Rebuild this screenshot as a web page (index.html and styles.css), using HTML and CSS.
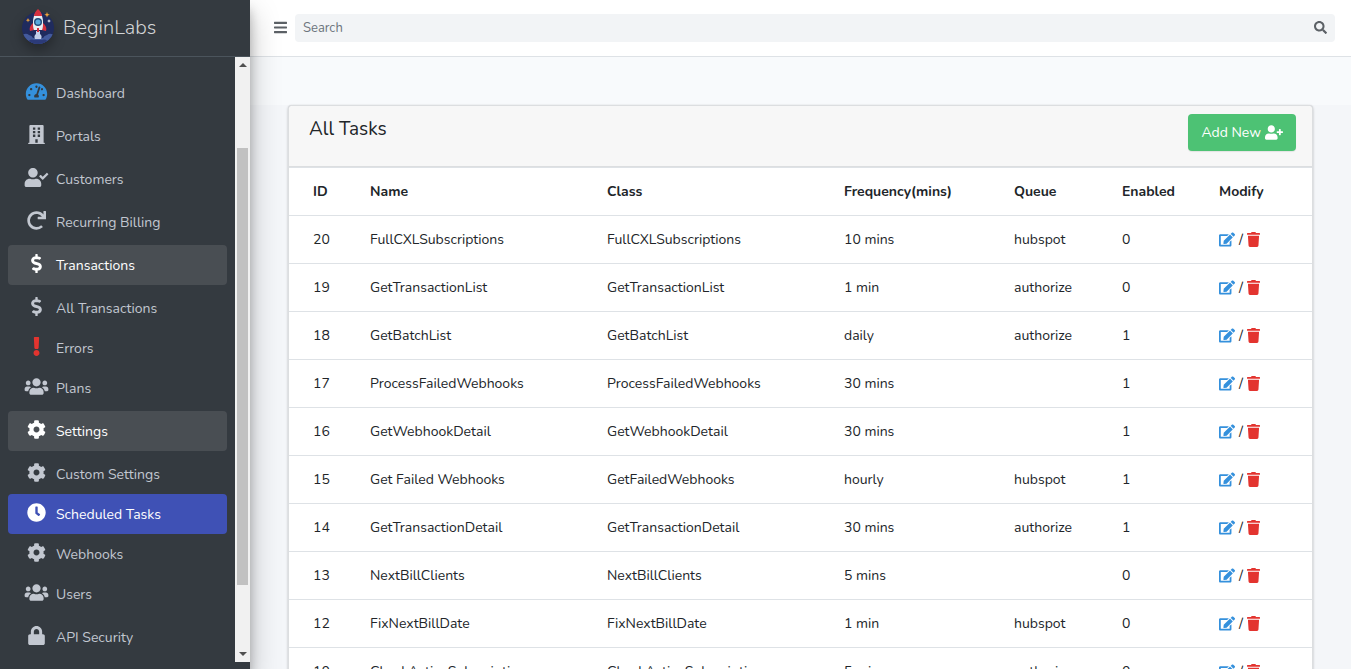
FILE: index.html
```html
<!DOCTYPE html>
<html lang="en">
<head>
  <meta charset="UTF-8">
  <meta name="viewport" content="width=device-width, initial-scale=1.0">
  <title>BeginLabs - Scheduled Tasks</title>
  <link rel="stylesheet" href="styles.css">
</head>
<body>

  <!-- icons -->
  <svg class="sprite" aria-hidden="true">
    <symbol id="bars" viewBox="0 0 448 512"><path d="M16 132h416c8.837 0 16-7.163 16-16V76c0-8.837-7.163-16-16-16H16C7.163 60 0 67.163 0 76v40c0 8.837 7.163 16 16 16zm0 160h416c8.837 0 16-7.163 16-16v-40c0-8.837-7.163-16-16-16H16c-8.837 0-16 7.163-16 16v40c0 8.837 7.163 16 16 16zm0 160h416c8.837 0 16-7.163 16-16v-40c0-8.837-7.163-16-16-16H16c-8.837 0-16 7.163-16 16v40c0 8.837 7.163 16 16 16z"/></symbol>
    <symbol id="search" viewBox="0 0 512 512"><path d="M505 442.7L405.3 343c-4.5-4.5-10.6-7-17-7H372c27.6-35.3 44-79.7 44-128C416 93.1 322.9 0 208 0S0 93.1 0 208s93.1 208 208 208c48.3 0 92.7-16.4 128-44v16.3c0 6.4 2.5 12.5 7 17l99.7 99.7c9.4 9.4 24.6 9.4 33.9 0l28.3-28.3c9.4-9.4 9.4-24.6.1-34zM208 336c-70.7 0-128-57.2-128-128 0-70.7 57.2-128 128-128 70.7 0 128 57.2 128 128 0 70.7-57.2 128-128 128z"/></symbol>
    <symbol id="tachometer" viewBox="0 0 576 512"><path d="M288 32C128.94 32 0 160.94 0 320c0 52.8 14.25 102.26 39.06 144.8 5.61 9.62 16.3 15.2 27.44 15.2h443c11.14 0 21.83-5.58 27.44-15.2C561.75 422.26 576 372.8 576 320c0-159.06-128.94-288-288-288zm0 64c14.71 0 26.58 10.13 30.32 23.65-1.11 2.26-2.64 4.23-3.45 6.67l-9.22 27.67c-5.13 3.49-10.97 6.01-17.64 6.01-17.67 0-32-14.33-32-32S270.33 96 288 96zM96 384c-17.67 0-32-14.33-32-32s14.33-32 32-32 32 14.33 32 32-14.33 32-32 32zm48-160c-17.67 0-32-14.33-32-32s14.33-32 32-32 32 14.33 32 32-14.33 32-32 32zm246.77-72.41l-61.33 184C343.13 347.33 352 364.54 352 384c0 11.72-3.38 22.55-8.88 32H232.88c-5.5-9.45-8.88-20.28-8.88-32 0-33.94 26.5-61.43 59.9-63.59l61.34-184.01c4.17-12.56 17.73-19.45 30.36-15.17 12.57 4.19 19.35 17.79 15.17 30.36zm14.66 57.2l15.52-46.55c3.47-1.29 7.13-2.23 11.05-2.23 17.67 0 32 14.33 32 32s-14.33 32-32 32c-11.38-.01-20.89-6.28-26.57-15.22zM480 384c-17.67 0-32-14.33-32-32s14.33-32 32-32 32 14.33 32 32-14.33 32-32 32z"/></symbol>
    <symbol id="building" viewBox="0 0 448 512"><path fill-rule="evenodd" d="M436 480h-20V24c0-13.255-10.745-24-24-24H56C42.745 0 32 10.745 32 24v456H12c-6.627 0-12 5.373-12 12v20h448v-20c0-6.627-5.373-12-12-12zM128 64h64v64h-64zM256 64h64v64h-64zM128 160h64v64h-64zM256 160h64v64h-64zM128 256h64v64h-64zM256 256h64v64h-64zM192 384h64v96h-64z"/></symbol>
    <symbol id="user-check" viewBox="0 0 640 512"><path d="M224 256c70.7 0 128-57.3 128-128S294.7 0 224 0 96 57.3 96 128s57.3 128 128 128zm89.6 32h-16.7c-22.2 10.2-46.9 16-72.9 16s-50.6-5.8-72.9-16h-16.7C60.2 288 0 348.2 0 422.4V464c0 26.5 21.5 48 48 48h352c26.5 0 48-21.5 48-48v-41.6c0-74.2-60.2-134.4-134.4-134.4zm323-128.4l-27.8-28.1c-4.6-4.7-12.1-4.7-16.8-.1l-104.8 104-45.5-45.8c-4.6-4.7-12.1-4.7-16.8-.1l-28.1 27.9c-4.7 4.6-4.7 12.1-.1 16.8l81.7 82.3c4.6 4.7 12.1 4.7 16.8.1l141.3-140.2c4.6-4.7 4.7-12.2.1-16.8z"/></symbol>
    <symbol id="user-plus" viewBox="0 0 640 512"><path d="M624 208h-64v-64c0-8.8-7.2-16-16-16h-32c-8.8 0-16 7.2-16 16v64h-64c-8.8 0-16 7.2-16 16v32c0 8.8 7.2 16 16 16h64v64c0 8.8 7.2 16 16 16h32c8.8 0 16-7.2 16-16v-64h64c8.8 0 16-7.2 16-16v-32c0-8.8-7.2-16-16-16zM224 256c70.7 0 128-57.3 128-128S294.7 0 224 0 96 57.3 96 128s57.3 128 128 128zm89.6 32h-16.7c-22.2 10.2-46.9 16-72.9 16s-50.6-5.8-72.9-16h-16.7C60.2 288 0 348.2 0 422.4V464c0 26.5 21.5 48 48 48h352c26.5 0 48-21.5 48-48v-41.6c0-74.2-60.2-134.4-134.4-134.4z"/></symbol>
    <symbol id="redo" viewBox="0 0 512 512"><path d="M500.33 0h-47.41a12 12 0 0 0-12 12.57l4 82.76A247.42 247.42 0 0 0 256 8C119.34 8 7.9 119.53 8 256.19 8.1 393.07 119.1 504 256 504a247.1 247.1 0 0 0 166.18-63.91 12 12 0 0 0 .48-17.43l-34-34a12 12 0 0 0-16.38-.55A176 176 0 1 1 402.1 157.8l-101.53-4.87a12 12 0 0 0-12.57 12v47.41a12 12 0 0 0 12 12h200.33a12 12 0 0 0 12-12V12a12 12 0 0 0-12-12z"/></symbol>
    <symbol id="dollar" viewBox="0 0 288 512"><path d="M209.2 233.4l-108-31.6C88.7 198.2 80 186.5 80 173.5c0-16.3 13.2-29.5 29.5-29.5h66.3c12.2 0 24.2 3.7 34.2 10.5 6.1 4.1 14.3 3.1 19.5-2l34.8-34c7.1-6.9 6.1-18.4-1.8-24.5C238 74.8 207.4 64.1 176 64V16c0-8.8-7.2-16-16-16h-32c-8.8 0-16 7.2-16 16v48h-2.5C45.8 64-5.4 118.7.5 183.6c4.2 46.1 39.4 83.6 83.8 96.6l102.5 30c12.5 3.7 21.2 15.3 21.2 28.3 0 16.3-13.2 29.5-29.5 29.5h-66.3C100 368 88 364.3 78 357.5c-6.1-4.1-14.3-3.1-19.5 2l-34.8 34c-7.1 6.9-6.1 18.4 1.8 24.5 24.5 19.2 55.1 29.9 86.5 30v48c0 8.8 7.2 16 16 16h32c8.8 0 16-7.2 16-16v-48.2c46.6-.9 90.3-28.6 105.7-72.7 21.5-61.6-14.6-124.8-72.5-141.7z"/></symbol>
    <symbol id="exclamation" viewBox="0 0 192 512"><path d="M176 432c0 44.112-35.888 80-80 80s-80-35.888-80-80 35.888-80 80-80 80 35.888 80 80zM25.26 25.199l13.6 272C39.499 309.972 50.041 320 62.83 320h66.34c12.789 0 23.331-10.028 23.97-22.801l13.6-272C167.425 11.49 156.496 0 142.77 0H49.23C35.504 0 24.575 11.49 25.26 25.199z"/></symbol>
    <symbol id="users" viewBox="0 0 640 512"><path d="M96 224c35.3 0 64-28.7 64-64s-28.7-64-64-64-64 28.7-64 64 28.7 64 64 64zm448 0c35.3 0 64-28.7 64-64s-28.7-64-64-64-64 28.7-64 64 28.7 64 64 64zm32 32h-64c-17.6 0-33.5 7.1-45.1 18.6 40.3 22.1 68.9 62 75.1 109.4h66c17.7 0 32-14.3 32-32v-32c0-35.3-28.7-64-64-64zm-256 0c61.9 0 112-50.1 112-112S381.9 32 320 32 208 82.1 208 144s50.1 112 112 112zm76.8 32h-8.3c-20.8 10-43.9 16-68.5 16s-47.6-6-68.5-16h-8.3C179.6 288 128 339.6 128 403.2V432c0 26.5 21.5 48 48 48h288c26.5 0 48-21.5 48-48v-28.8c0-63.6-51.6-115.2-115.2-115.2zm-223.7-13.4C161.5 263.1 145.6 256 128 256H64c-35.3 0-64 28.7-64 64v32c0 17.7 14.3 32 32 32h65.9c6.3-47.4 34.9-87.3 75.2-109.4z"/></symbol>
    <symbol id="cog" viewBox="0 0 512 512"><path d="M487.4 315.7l-42.6-24.6c4.3-23.2 4.3-47 0-70.2l42.6-24.6c4.9-2.8 7.1-8.6 5.5-14-11.1-35.6-30-67.8-54.7-94.6-3.8-4.1-10-5.1-14.8-2.3L380.8 110c-17.9-15.4-38.5-27.3-60.8-35.1V25.8c0-5.6-3.9-10.5-9.4-11.7-36.7-8.2-74.3-7.8-109.2 0-5.5 1.2-9.4 6.1-9.4 11.7V75c-22.2 7.9-42.8 19.8-60.8 35.1L88.7 85.5c-4.9-2.8-11-1.9-14.8 2.3-24.7 26.7-43.6 58.9-54.7 94.6-1.7 5.4.6 11.2 5.5 14L67.3 221c-4.3 23.2-4.3 47 0 70.2l-42.6 24.6c-4.9 2.8-7.1 8.6-5.5 14 11.1 35.6 30 67.8 54.7 94.6 3.8 4.1 10 5.1 14.8 2.3l42.6-24.6c17.9 15.4 38.5 27.3 60.8 35.1v49.2c0 5.6 3.9 10.5 9.4 11.7 36.7 8.2 74.3 7.8 109.2 0 5.5-1.2 9.4-6.1 9.4-11.7v-49.2c22.2-7.9 42.8-19.8 60.8-35.1l42.6 24.6c4.9 2.8 11 1.9 14.8-2.3 24.7-26.7 43.6-58.9 54.7-94.6 1.5-5.5-.7-11.3-5.6-14.1zM256 336c-44.1 0-80-35.9-80-80s35.9-80 80-80 80 35.9 80 80-35.9 80-80 80z"/></symbol>
    <symbol id="clock" viewBox="0 0 512 512"><path d="M256 8C119 8 8 119 8 256s111 248 248 248 248-111 248-248S393 8 256 8zm92.49 313l-20 25a16 16 0 0 1-22.49 2.5l-67-49.72a40 40 0 0 1-15-31.23V112a16 16 0 0 1 16-16h32a16 16 0 0 1 16 16v144l58 42.5a16 16 0 0 1 2.49 22.5z"/></symbol>
    <symbol id="lock" viewBox="0 0 448 512"><path d="M400 224h-24v-72C376 68.2 307.8 0 224 0S72 68.2 72 152v72H48c-26.5 0-48 21.5-48 48v192c0 26.5 21.5 48 48 48h352c26.5 0 48-21.5 48-48V272c0-26.5-21.5-48-48-48zm-104 0H152v-72c0-39.7 32.3-72 72-72s72 32.3 72 72v72z"/></symbol>
    <symbol id="edit" viewBox="0 0 576 512"><path d="M402.6 83.2l90.2 90.2c3.8 3.8 3.8 10 0 13.8L274.4 405.6l-92.8 10.3c-12.4 1.4-22.9-9.1-21.5-21.5l10.3-92.8L388.8 83.2c3.8-3.8 10-3.8 13.8 0zm162-22.9l-48.8-48.8c-15.2-15.2-39.9-15.2-55.2 0l-35.4 35.4c-3.8 3.8-3.8 10 0 13.8l90.2 90.2c3.8 3.8 10 3.8 13.8 0l35.4-35.4c15.2-15.3 15.2-40 0-55.2zM384 346.2V448H64V128h229.8c3.2 0 6.2-1.3 8.5-3.5l40-40c7.6-7.6 2.2-20.5-8.5-20.5H48C21.5 64 0 85.5 0 112v352c0 26.5 21.5 48 48 48h352c26.5 0 48-21.5 48-48V306.2c0-10.7-12.9-16-20.5-8.5l-40 40c-2.2 2.3-3.5 5.3-3.5 8.5z"/></symbol>
    <symbol id="trash" viewBox="0 0 448 512"><path d="M432 32H312l-9.4-18.7A24 24 0 0 0 281.1 0H166.8a23.72 23.72 0 0 0-21.4 13.3L136 32H16A16 16 0 0 0 0 48v32a16 16 0 0 0 16 16h416a16 16 0 0 0 16-16V48a16 16 0 0 0-16-16zM53.2 467a48 48 0 0 0 47.9 45h245.8a48 48 0 0 0 47.9-45L416 128H32z"/></symbol>
  </svg>

  <div class="wrapper">

    <!-- sidebar -->
    <aside class="sidebar">
      <a href="#" class="brand">
        <svg class="brand-logo" viewBox="0 0 34 36" aria-hidden="true">
          <defs><clipPath id="disc"><circle cx="17" cy="19" r="16"/></clipPath></defs>
          <circle cx="17" cy="19" r="16" fill="#1f2b5e"/>
          <g clip-path="url(#disc)">
            <path d="M0 28a5 5 0 0 1 8-2 5 5 0 0 1 4 3h10a5 5 0 0 1 4-3 5 5 0 0 1 8 2v9H0z" fill="#435a9c"/>
            <path d="M7 34a4 4 0 0 1 6-3h8a4 4 0 0 1 6 3v4H7z" fill="#2b3a78"/>
          </g>
          <path d="M15 22h4v3a4 4 0 0 1 1 5h-6a4 4 0 0 1 1-5z" fill="#c3cfe8"/>
          <path d="M12 14c-3 3-4 5-3 8l4-1zM22 14c3 3 4 5 3 8l-4-1z" fill="#d5303e"/>
          <path d="M17 1c-4 4-5 8-5 12 0 4 0 6 1 8h8c1-2 1-4 1-8 0-4-1-8-5-12z" fill="#e9edf3"/>
          <path d="M17 0c-2 2-4 4-4 7h8c0-3-2-5-4-7z" fill="#d5303e"/>
          <circle cx="17" cy="13" r="4" fill="#1f4a78"/>
          <circle cx="17" cy="13" r="2.600" fill="#58a9de"/>
          <path d="M16 19h2v4h-2z" fill="#d5303e"/>
          <path d="M26 3l.7 2 2 .7-2 .7-.7 2-.7-2-2-.7 2-.7zM7 9l.6 1.600 1.600.6-1.600.6L7 13.400l-.6-1.600-1.600-.6 1.600-.6z" fill="#f2a63a"/>
          <path d="M28 10l.5 1.500 1.500.5-1.500.5-.5 1.500-.5-1.500-1.500-.5 1.500-.5z" fill="#fff"/>
        </svg>
        <span class="brand-text">BeginLabs</span>
      </a>
      <div class="sidebar-body">
        <nav class="menu">
          <ul class="nav">
            <li><a href="#" class="nav-link"><svg class="nav-icon blue"><use href="#tachometer"/></svg>Dashboard</a></li>
            <li><a href="#" class="nav-link"><svg class="nav-icon"><use href="#building"/></svg>Portals</a></li>
            <li><a href="#" class="nav-link"><svg class="nav-icon"><use href="#user-check"/></svg>Customers</a></li>
            <li><a href="#" class="nav-link"><svg class="nav-icon"><use href="#redo"/></svg>Recurring Billing</a></li>
            <li>
              <a href="#" class="nav-link open"><svg class="nav-icon"><use href="#dollar"/></svg>Transactions</a>
              <ul class="nav-tree">
                <li><a href="#" class="nav-link"><svg class="nav-icon"><use href="#dollar"/></svg>All Transactions</a></li>
                <li><a href="#" class="nav-link"><svg class="nav-icon red"><use href="#exclamation"/></svg>Errors</a></li>
                <li><a href="#" class="nav-link"><svg class="nav-icon"><use href="#users"/></svg>Plans</a></li>
              </ul>
            </li>
            <li>
              <a href="#" class="nav-link open"><svg class="nav-icon"><use href="#cog"/></svg>Settings</a>
              <ul class="nav-tree">
                <li><a href="#" class="nav-link"><svg class="nav-icon"><use href="#cog"/></svg>Custom Settings</a></li>
                <li><a href="#" class="nav-link active"><svg class="nav-icon"><use href="#clock"/></svg>Scheduled Tasks</a></li>
                <li><a href="#" class="nav-link"><svg class="nav-icon"><use href="#cog"/></svg>Webhooks</a></li>
                <li><a href="#" class="nav-link"><svg class="nav-icon"><use href="#users"/></svg>Users</a></li>
              </ul>
            </li>
            <li><a href="#" class="nav-link"><svg class="nav-icon"><use href="#lock"/></svg>API Security</a></li>
          </ul>
        </nav>
        <div class="scrollbar" aria-hidden="true">
          <span class="arrow up"></span>
          <div class="track"><div class="thumb"></div></div>
          <span class="arrow down"></span>
        </div>
      </div>
    </aside>

    <!-- content -->
    <div class="main">
      <header class="navbar">
        <button type="button" class="toggle" aria-label="Toggle menu"><svg class="icon"><use href="#bars"/></svg></button>
        <form class="search">
          <input type="search" placeholder="Search" aria-label="Search">
          <button type="button" aria-label="Search"><svg class="icon"><use href="#search"/></svg></button>
        </form>
      </header>
      <div class="subheader"></div>

      <main class="content">
        <div class="card">
          <div class="card-header">
            <h3>All Tasks</h3>
            <button type="button" class="btn-add">Add New <svg class="icon-wide"><use href="#user-plus"/></svg></button>
          </div>
          <table class="tasks">
            <colgroup>
              <col class="c-id"><col class="c-name"><col class="c-name"><col class="c-freq"><col class="c-queue"><col class="c-enabled"><col class="c-modify">
            </colgroup>
            <thead>
              <tr><th>ID</th><th>Name</th><th>Class</th><th>Frequency(mins)</th><th>Queue</th><th>Enabled</th><th>Modify</th></tr>
            </thead>
            <tbody id="tasks"></tbody>
          </table>
        </div>
      </main>
    </div>

  </div>

  <script>
    const tasks = [
      [20, "FullCXLSubscriptions", "FullCXLSubscriptions", "10 mins", "hubspot", 0],
      [19, "GetTransactionList", "GetTransactionList", "1 min", "authorize", 0],
      [18, "GetBatchList", "GetBatchList", "daily", "authorize", 1],
      [17, "ProcessFailedWebhooks", "ProcessFailedWebhooks", "30 mins", "", 1],
      [16, "GetWebhookDetail", "GetWebhookDetail", "30 mins", "", 1],
      [15, "Get Failed Webhooks", "GetFailedWebhooks", "hourly", "hubspot", 1],
      [14, "GetTransactionDetail", "GetTransactionDetail", "30 mins", "authorize", 1],
      [13, "NextBillClients", "NextBillClients", "5 mins", "", 0],
      [12, "FixNextBillDate", "FixNextBillDate", "1 min", "hubspot", 0],
      [10, "CheckActiveSubscriptions", "CheckActiveSubscriptions", "5 mins", "authorize", 0]
    ];
    const modify = `<a href="#" class="edit" aria-label="Edit"><svg><use href="#edit"/></svg></a>
      / <a href="#" class="delete" aria-label="Delete"><svg><use href="#trash"/></svg></a>`;
    document.getElementById("tasks").innerHTML = tasks.map(t =>
      `<tr>${t.map(v => `<td>${v}</td>`).join("")}<td><div class="modify">${modify}</div></td></tr>`
    ).join("");
  </script>

</body>
</html>
```
FILE: styles.css
```css
* {
  box-sizing: border-box;
}
body {
  margin: 0;
  font-family: Nunito, Lato, sans-serif;
  font-size: 14px;
  line-height: 23px;
  color: #212529;
  background: #f4f6f9;
}
a {
  text-decoration: none;
}
ul {
  list-style: none;
  margin: 0;
  padding: 0;
}
svg {
  fill: currentColor;
}
.sprite {
  display: none;
}
.wrapper {
  display: flex;
  height: 100vh;
  overflow: hidden;
}

/* sidebar */
.sidebar {
  display: flex;
  flex-direction: column;
  flex: 0 0 250px;
  z-index: 2;
  padding-bottom: 7px;
  background: #343a40;
  box-shadow: 0 14px 28px rgba(0,0,0,0.25), 0 10px 10px rgba(0,0,0,0.22);
}
.brand {
  display: flex;
  align-items: center;
  flex: 0 0 57px;
  gap: 8px;
  padding: 0 21px 2px;
  border-bottom: 1px solid #4b545c;
  color: #d2d4d6;
}
.brand-logo {
  width: 34px;
  height: 36px;
  filter: drop-shadow(0 6px 6px rgba(0,0,0,0.3));
}
.brand-text {
  font-size: 20px;
  font-weight: 300;
}
.sidebar-body {
  display: flex;
  flex: 1;
  min-height: 0;
}
.menu {
  flex: 1;
  padding: 16px 8px 0;
  overflow: hidden;
}
.nav {
  display: flex;
  flex-direction: column;
  gap: 3px;
}
.nav-tree {
  margin-top: 3px;
}
.nav-link {
  display: flex;
  align-items: center;
  gap: 7px;
  height: 40px;
  padding: 0 16px;
  border-radius: 4px;
  color: #c2c7d0;
}
.nav-icon {
  width: 25px;
  height: 19px;
  margin-bottom: 4px;
}
.nav-link.open {
  background: #494e53;
  color: #fff;
}
.nav-link.active {
  background: #3f51b5;
  color: #fff;
}
.blue {
  color: #3490dc;
}
.red {
  color: #e3342f;
}

/* scrollbar */
.scrollbar {
  display: flex;
  flex-direction: column;
  align-items: center;
  width: 15px;
  padding: 6px 0;
  background: #f1f1f1;
}
.arrow {
  border: 4px solid transparent;
}
.up {
  border-top: 0;
  border-bottom-color: #505050;
}
.down {
  border-bottom: 0;
  border-top-color: #505050;
}
.track {
  display: flex;
  flex: 1;
  width: 11px;
  padding: 81px 0 67px;
}
.thumb {
  flex: 1;
  background: #c1c1c1;
}

/* top bar */
.main {
  flex: 1;
  min-width: 0;
}
.navbar {
  display: flex;
  align-items: center;
  height: 57px;
  padding: 0 16px 1px 24px;
  background: #fff;
  border-bottom: 1px solid #dee2e6;
}
.navbar button {
  display: flex;
  padding: 0;
  border: 0;
  background: none;
  color: #5c6166;
}
.toggle {
  width: 21px;
}
.icon {
  width: 13px;
  height: 15px;
}
.search {
  display: flex;
  align-items: center;
  flex: 1;
  height: 28px;
  padding: 0 8px;
  border-radius: 4px;
  background: #f2f4f6;
}
.search input {
  flex: 1;
  min-width: 0;
  padding: 2px 0 0;
  border: 0;
  outline: 0;
  background: none;
  font: inherit;
  font-size: 13px;
}
.search input::placeholder {
  color: #6c757d;
}
.subheader {
  height: 48px;
  background: #f8fafc;
}

/* card */
.content {
  padding: 0 38px;
}
.card {
  border: 1px solid #dcdee0;
  border-radius: 4px;
  background: #fff;
  box-shadow: 0 0 1px rgba(0,0,0,0.125), 0 1px 3px rgba(0,0,0,0.2);
}
.card-header {
  display: flex;
  justify-content: space-between;
  align-items: flex-start;
  height: 61px;
  padding: 8px 16px 0 20px;
  background: #f7f7f7;
  border-bottom: 1px solid #dcdee0;
  border-radius: 4px 4px 0 0;
}
.card-header h3 {
  margin: 4px 0 0;
  font-size: 19px;
  font-weight: 400;
}
.btn-add {
  display: flex;
  align-items: center;
  gap: 4px;
  height: 37px;
  padding: 0 13px;
  border: 0;
  border-radius: 4px;
  background: #4dc274;
  color: #fff;
  font: inherit;
  box-shadow: 0 1px 1px rgba(0,0,0,0.08);
}
.icon-wide {
  width: 18px;
  height: 15px;
}
.tasks {
  width: 100%;
  table-layout: fixed;
  border-collapse: collapse;
}
.tasks th, .tasks td {
  height: 48px;
  padding: 0 12px;
  text-align: left;
  border-top: 1px solid #dee2e6;
  white-space: nowrap;
}
.tasks th:first-child, .tasks td:first-child {
  padding-left: 24px;
}
.c-id {
  width: 69px;
}
.c-name {
  width: 237px;
}
.c-freq {
  width: 170px;
}
.c-queue {
  width: 108px;
}
.c-enabled {
  width: 97px;
}
.modify {
  display: flex;
  align-items: center;
  gap: 4px;
}
.modify a {
  display: flex;
}
.modify svg {
  width: 16px;
  height: 15px;
}
.edit {
  color: #3490dc;
}
.delete {
  color: #e3342f;
}
.modify .delete svg {
  width: 13px;
}
```
